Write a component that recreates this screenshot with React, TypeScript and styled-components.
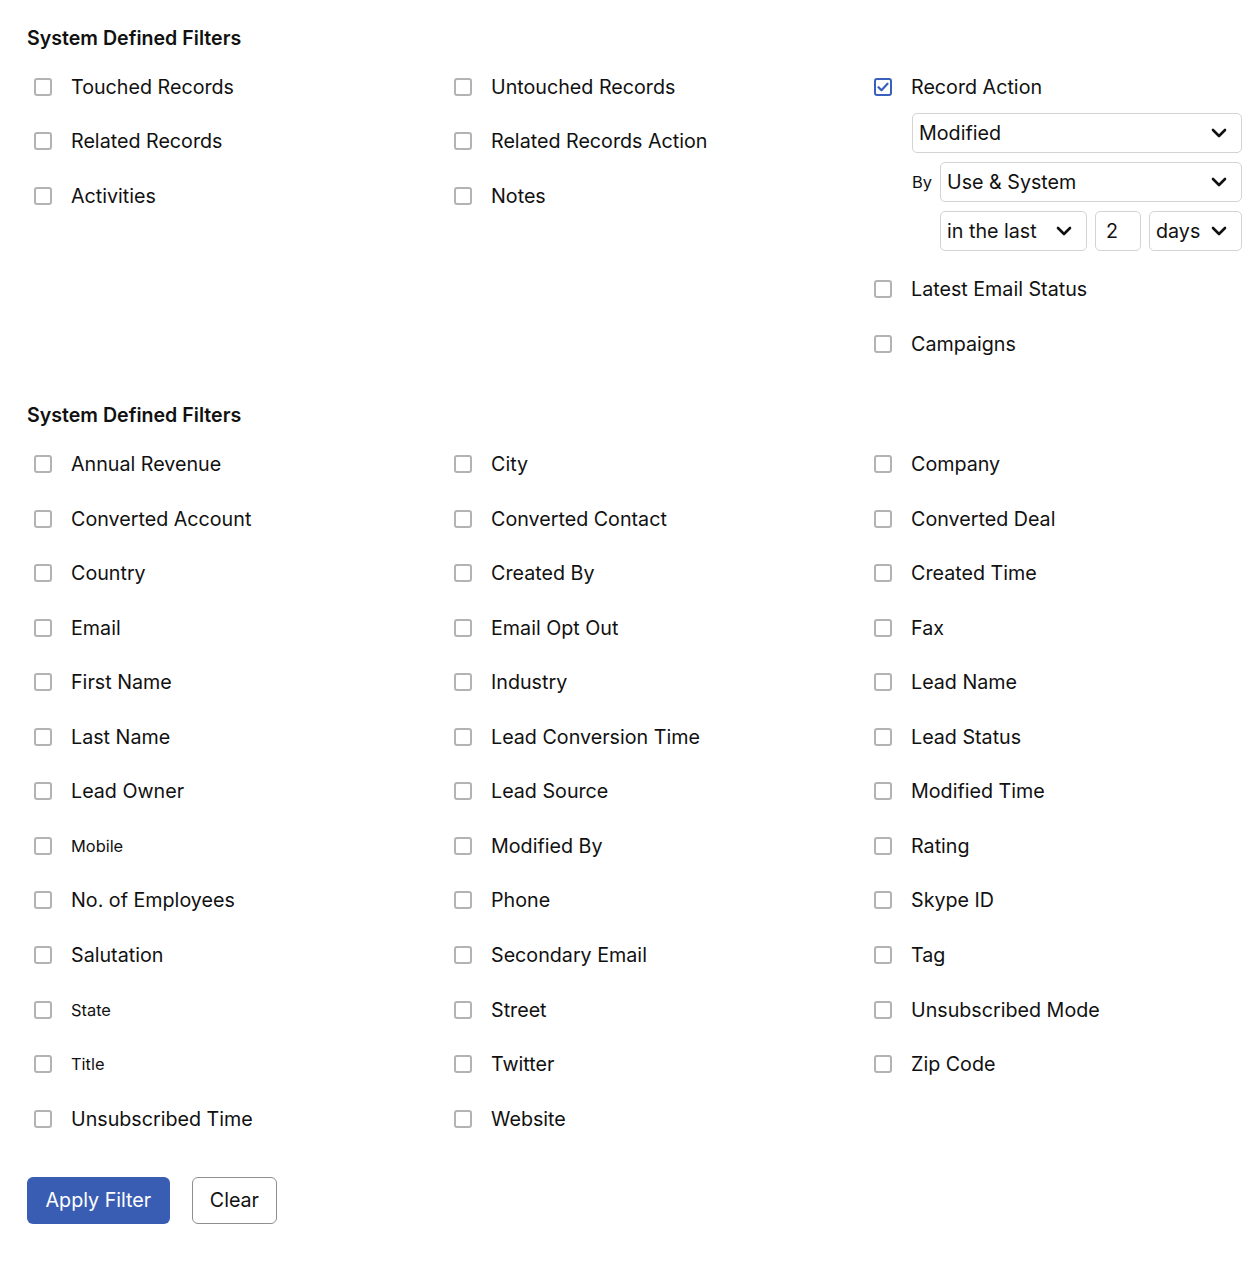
import React from "react";
import styled, { createGlobalStyle } from "styled-components";

const Global = createGlobalStyle`
  html, body { margin: 0; padding: 0; background: #fff; }
  body { font-family: Inter, "Noto Sans", Arial, sans-serif; color: #111; }
`;

const Page = styled.div`
  padding: 26px 16px 42px 27px;
  box-sizing: border-box;
  width: 1258px;
`;

const Heading = styled.h2`
  margin: 0;
  font-size: 19.6px;
  line-height: 24px;
  font-weight: 600;
  color: #111;
`;

const Section = styled.section<{ $gapAfter?: number }>`
  display: flex;
  flex-direction: column;
  margin-bottom: ${(p) => p.$gapAfter ?? 0}px;
`;

const Columns = styled.div`
  display: grid;
  grid-template-columns: 420px 420px 1fr;
  margin-top: 9.7px;
`;

const Column = styled.div`
  display: flex;
  flex-direction: column;
`;

const Item = styled.div`
  display: flex;
  flex-direction: column;
  padding: 15.28px 0;
`;

const Row = styled.label`
  display: flex;
  align-items: center;
  height: 24px;
  padding-left: 7px;
  gap: 19px;
  cursor: pointer;
`;

const Box = styled.span<{ $checked?: boolean }>`
  width: 18px;
  height: 18px;
  box-sizing: border-box;
  border: 2px solid ${(p) => (p.$checked ? "#3a60bd" : "#b3b3b3")};
  border-radius: 3px;
  display: flex;
  align-items: center;
  justify-content: center;
  flex: none;
`;

const Label = styled.span<{ $small?: boolean }>`
  font-size: ${(p) => (p.$small ? "16.4px" : "19.7px")};
  line-height: 24px;
  color: #111;
  white-space: nowrap;
`;

const Sub = styled.div`
  margin-top: 14px;
  margin-bottom: -4px;
  margin-left: 45px;
  display: flex;
  flex-direction: column;
  gap: 9px;
`;

const SubRow = styled.div`
  display: flex;
  align-items: center;
  gap: 8px;
`;

const By = styled.span`
  font-size: 16.5px;
  width: 20px;
  color: #111;
`;

const Select = styled.div<{ $w?: number }>`
  height: 40px;
  box-sizing: border-box;
  border: 1px solid #d3d3d3;
  border-radius: 5px;
  display: flex;
  align-items: center;
  justify-content: space-between;
  padding: 0 14px 0 6px;
  font-size: 19.7px;
  color: #111;
  flex: ${(p) => (p.$w ? "none" : "1")};
  width: ${(p) => (p.$w ? `${p.$w}px` : "auto")};
`;

const Input = styled.div`
  width: 46px;
  height: 40px;
  box-sizing: border-box;
  border: 1px solid #d3d3d3;
  border-radius: 5px;
  display: flex;
  align-items: center;
  padding-left: 10px;
  font-size: 19.7px;
  flex: none;
`;

const Grid = styled.div`
  display: grid;
  grid-template-columns: 420px 420px 1fr;
  margin-top: 9.7px;
`;

const Actions = styled.div`
  display: flex;
  gap: 22px;
  margin-top: 31px;
`;

const Button = styled.button<{ $primary?: boolean }>`
  height: 47px;
  box-sizing: border-box;
  padding: 0 ${(p) => (p.$primary ? "18.5px" : "17px")};
  border-radius: 6px;
  font-family: Inter, Arial, sans-serif;
  font-size: 19.7px;
  border: ${(p) => (p.$primary ? "none" : "1.5px solid #8e8e8e")};
  background: ${(p) => (p.$primary ? "#3a5db4" : "#fff")};
  color: ${(p) => (p.$primary ? "#fff" : "#111")};
  cursor: pointer;
`;

const Chevron = () => (
  <svg width="16" height="10" viewBox="0 0 16 10" fill="none">
    <path d="M2 2l6 6 6-6" stroke="#111" strokeWidth="2.6" strokeLinecap="round" strokeLinejoin="round" />
  </svg>
);

const Check = () => (
  <svg width="12" height="10" viewBox="0 0 12 10" fill="none">
    <path d="M1.5 5.2l3 3 6-6.5" stroke="#3a60bd" strokeWidth="2.2" strokeLinecap="round" strokeLinejoin="round" />
  </svg>
);

const smallSet = new Set(["Mobile", "State", "Title"]);

const CheckItem: React.FC<{ label: string; checked?: boolean; children?: React.ReactNode }> = ({ label, checked, children }) => (
  <Item>
    <Row>
      <Box $checked={checked}>{checked && <Check />}</Box>
      <Label $small={smallSet.has(label)}>{label}</Label>
    </Row>
    {children}
  </Item>
);

const fields = [
  "Annual Revenue", "City", "Company",
  "Converted Account", "Converted Contact", "Converted Deal",
  "Country", "Created By", "Created Time",
  "Email", "Email Opt Out", "Fax",
  "First Name", "Industry", "Lead Name",
  "Last Name", "Lead Conversion Time", "Lead Status",
  "Lead Owner", "Lead Source", "Modified Time",
  "Mobile", "Modified By", "Rating",
  "No. of Employees", "Phone", "Skype ID",
  "Salutation", "Secondary Email", "Tag",
  "State", "Street", "Unsubscribed Mode",
  "Title", "Twitter", "Zip Code",
  "Unsubscribed Time", "Website",
];

export default function App() {
  return (
    <Page>
      <Global />
      <Section $gapAfter={32}>
        <Heading>System Defined Filters</Heading>
        <Columns>
          <Column>
            <CheckItem label="Touched Records" />
            <CheckItem label="Related Records" />
            <CheckItem label="Activities" />
          </Column>
          <Column>
            <CheckItem label="Untouched Records" />
            <CheckItem label="Related Records Action" />
            <CheckItem label="Notes" />
          </Column>
          <Column>
            <CheckItem label="Record Action" checked>
              <Sub>
                <SubRow>
                  <Select>
                    Modified
                    <Chevron />
                  </Select>
                </SubRow>
                <SubRow>
                  <By>By</By>
                  <Select>
                    Use &amp; System
                    <Chevron />
                  </Select>
                </SubRow>
                <SubRow>
                  <By />
                  <Select $w={147}>
                    in the last
                    <Chevron />
                  </Select>
                  <Input>2</Input>
                  <Select>
                    days
                    <Chevron />
                  </Select>
                </SubRow>
              </Sub>
            </CheckItem>
            <CheckItem label="Latest Email Status" />
            <CheckItem label="Campaigns" />
          </Column>
        </Columns>
      </Section>
      <Section>
        <Heading>System Defined Filters</Heading>
        <Grid>
          {fields.map((f) => (
            <CheckItem key={f} label={f} />
          ))}
        </Grid>
      </Section>
      <Actions>
        <Button $primary>Apply Filter</Button>
        <Button>Clear</Button>
      </Actions>
    </Page>
  );
}
